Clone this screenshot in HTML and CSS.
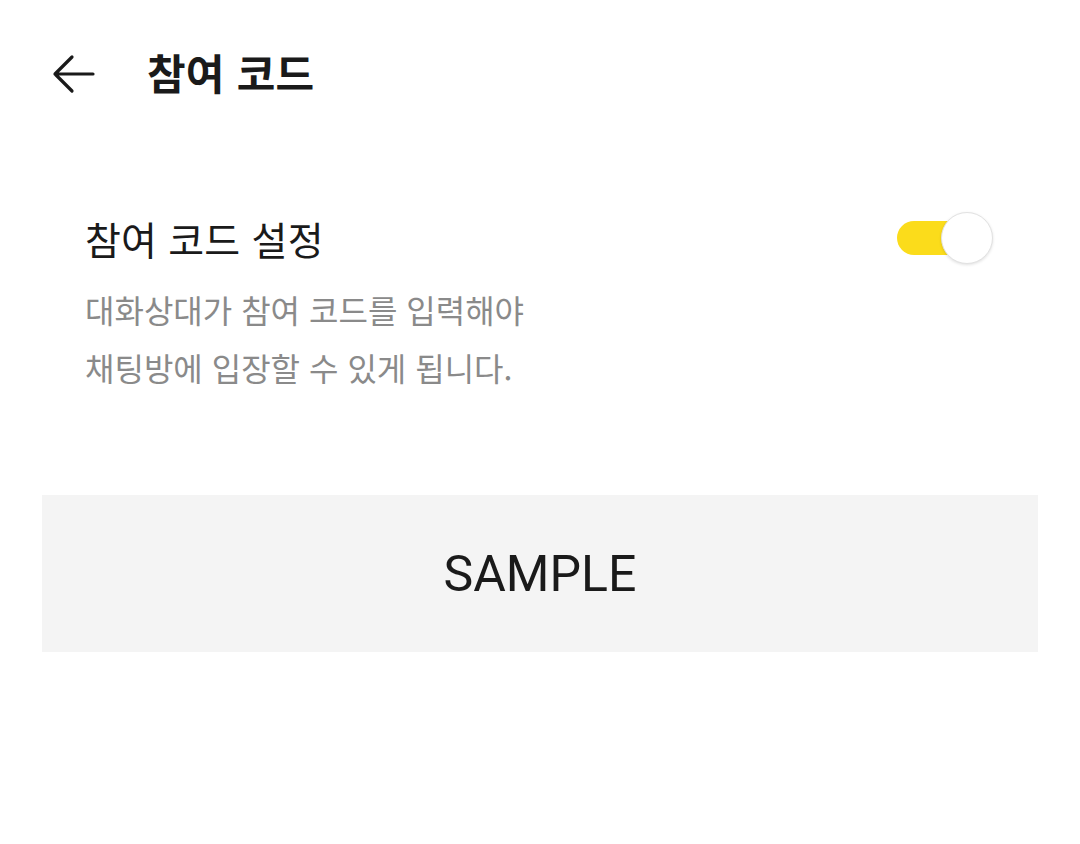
FILE: index.html
```html
<!DOCTYPE html>
<html lang="ko">
<head>
  <meta charset="UTF-8" />
  <meta name="viewport" content="width=device-width, initial-scale=1.0"/>
  <title>참여 코드</title>
  <link rel="stylesheet" href="styles.css">
</head>
<body>
  <header class="topbar">
    <button class="back-btn" aria-label="뒤로">
      <svg width="44" height="40" viewBox="0 0 44 40">
        <path d="M42 20H4M21 3L4 20L21 37" fill="none" stroke="#1a1a1a" stroke-width="3.2" stroke-linecap="round" stroke-linejoin="round"/>
      </svg>
    </button>
    <h1>참여 코드</h1>
  </header>

  <!-- Setting -->
  <section class="setting">
    <div class="setting-row">
      <h2>참여 코드 설정</h2>
      <label class="switch">
        <input type="checkbox" checked />
        <span class="track"></span>
        <span class="knob"></span>
      </label>
    </div>
    <p class="desc">대화상대가 참여 코드를 입력해야<br>채팅방에 입장할 수 있게 됩니다.</p>
  </section>

  <div class="code-box">SAMPLE</div>
</body>
</html>
```

FILE: styles.css
```css
* {
  margin: 0;
  padding: 0;
  box-sizing: border-box;
}

body {
  font-family: 'Noto Sans CJK KR', 'Noto Sans', sans-serif;
  background: #fff;
  color: #1a1a1a;
  width: 1080px;
  height: 844px;
  overflow: hidden;
}

.topbar {
  display: flex;
  align-items: flex-start;
  height: 150px;
  padding: 50px 0 0 51px;
}

.back-btn {
  background: none;
  border: none;
  width: 44px;
  height: 40px;
  margin-top: 4px;
  display: flex;
  cursor: pointer;
}

.topbar h1 {
  font-size: 42px;
  font-weight: 700;
  line-height: 44px;
  margin-left: 52px;
  letter-spacing: 0.2px;
}

.setting {
  padding: 52px 86px 0 85px;
}

.setting-row {
  display: flex;
  justify-content: space-between;
  align-items: center;
  height: 72px;
}

.setting-row h2 {
  font-size: 39px;
  font-weight: 400;
  letter-spacing: 0.2px;
}

.switch {
  position: relative;
  width: 98px;
  height: 56px;
  display: block;
  cursor: pointer;
}

.switch input {
  display: none;
}

.track {
  position: absolute;
  left: 1px;
  top: 11px;
  width: 80px;
  height: 34px;
  border-radius: 17px;
  background: #fbdc1b;
}

.knob {
  position: absolute;
  right: 1px;
  top: 2px;
  width: 52px;
  height: 52px;
  border-radius: 50%;
  background: #fff;
  border: 1px solid #e2e2e2;
  box-shadow: 0 1px 3px rgba(0, 0, 0, 0.12);
}

.desc {
  font-size: 32px;
  line-height: 58px;
  color: #8a8a8a;
  margin-top: 6px;
}

.code-box {
  margin: 99px 42px 0;
  height: 157px;
  background: #f4f4f4;
  display: flex;
  justify-content: center;
  align-items: center;
  font-family: Roboto, 'Noto Sans', sans-serif;
  font-size: 50px;
  color: #1a1a1a;
}
```
